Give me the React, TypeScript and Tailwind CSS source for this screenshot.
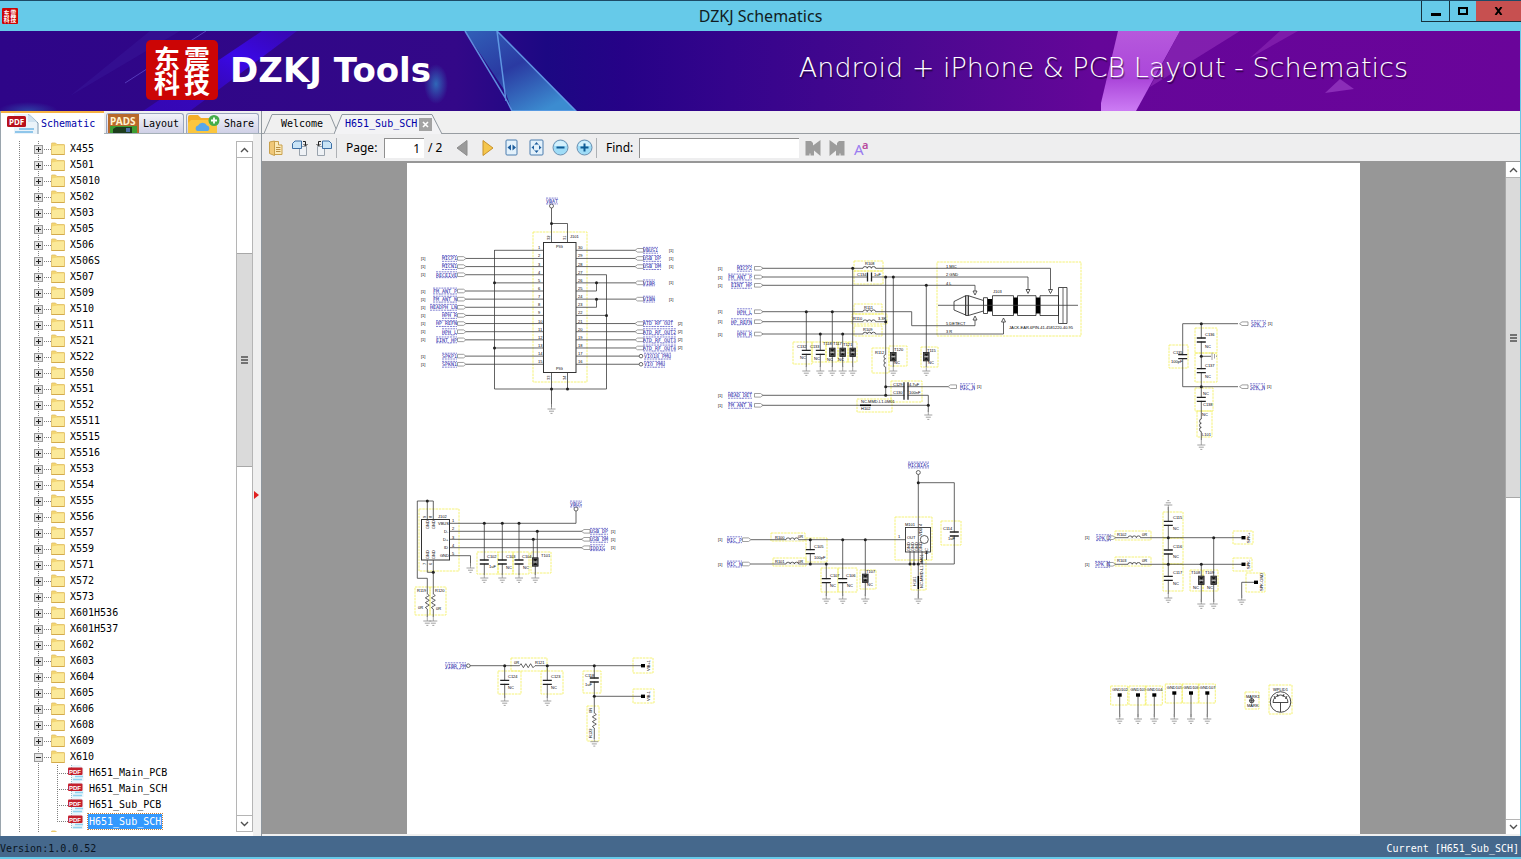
import React from "react";

const MONO = "font-['DejaVu_Sans_Mono','Liberation_Mono',monospace]";
const SANS = "font-['Noto_Sans','Open_Sans',sans-serif]";
const WIDE = "font-['DejaVu_Sans','Noto_Sans',sans-serif]";

/* ---------- schematic primitives ---------- */

const INK = "#3c3c3c";

const W = ({ d }: { d: string }) => <path d={d} fill="none" stroke={INK} strokeWidth="0.8" />;
const Dot = ({ x, y }: { x: number; y: number }) => <circle cx={x} cy={y} r="1.5" fill="#222" />;
const Sq = ({ x, y }: { x: number; y: number }) => <rect x={x - 2} y={y - 1.7} width="4" height="3.4" fill="#000" />;
const Box = ({ x, y, r, b }: { x: number; y: number; r: number; b: number }) => (
  <rect x={x} y={y} width={r - x} height={b - y} fill="none" stroke="#f4f06a" strokeWidth="0.9" strokeDasharray="2.5 0.8" />
);
const Gnd = ({ x, y, up }: { x: number; y: number; up?: boolean }) => {
  const s = up ? -1 : 1;
  return (
    <path
      d={`M${x} ${y - 5 * s}V${y}M${x - 4} ${y}h8M${x - 2.5} ${y + 2.2 * s}h5M${x - 1} ${y + 4.4 * s}h2`}
      fill="none"
      stroke="#8a8a8a"
      strokeWidth="0.8"
    />
  );
};
const Cap = ({ x, y }: { x: number; y: number }) => (
  <g>
    <rect x={x - 4.5} y={y - 1.5} width="9" height="3" fill="#fff" />
    <path d={`M${x - 4.5} ${y - 2}h9M${x - 4.5} ${y + 2}h9`} stroke="#222" strokeWidth="1.3" />
  </g>
);
const CapH = ({ x, y }: { x: number; y: number }) => (
  <g>
    <rect x={x - 1.5} y={y - 4} width="3" height="8" fill="#fff" />
    <path d={`M${x - 2} ${y - 4.5}v9M${x + 2} ${y - 4.5}v9`} stroke="#222" strokeWidth="1.3" />
  </g>
);
const Tvs = ({ x, y }: { x: number; y: number }) => (
  <g>
    <rect x={x - 2.8} y={y - 4.2} width="5.6" height="8.4" fill="#555" stroke="#222" strokeWidth="0.8" />
    <path d={`M${x - 2} ${y + 3}L${x} ${y + 0.6}L${x + 2} ${y + 3}zM${x - 2} ${y - 3}L${x} ${y - 0.6}L${x + 2} ${y - 3}z`} fill="#111" />
    <path d={`M${x - 2} ${y}h4`} stroke="#ddd" strokeWidth="0.8" />
  </g>
);
const CoilH = ({ x, y }: { x: number; y: number }) => (
  <g>
    <path d={`M${x} ${y}h12.6`} stroke="#fff" strokeWidth="1.6" />
    <path d={`M${x} ${y}a2.1 1.8 0 0 1 4.2 0a2.1 1.8 0 0 1 4.2 0a2.1 1.8 0 0 1 4.2 0`} fill="none" stroke={INK} strokeWidth="0.8" />
  </g>
);
const CoilV = ({ x, y }: { x: number; y: number }) => (
  <g>
    <path d={`M${x} ${y}v12.6`} stroke="#fff" strokeWidth="1.6" />
    <path d={`M${x} ${y}a1.8 2.1 0 0 0 0 4.2a1.8 2.1 0 0 0 0 4.2a1.8 2.1 0 0 0 0 4.2`} fill="none" stroke={INK} strokeWidth="0.8" />
  </g>
);
const ZigV = ({ x, y }: { x: number; y: number }) => (
  <g>
    <path d={`M${x} ${y}v15`} stroke="#fff" strokeWidth="1.6" />
    <path d={`M${x} ${y}l2 1.5l-4 2.4l4 2.4l-4 2.4l4 2.4l-4 2.4l2 1.5`} fill="none" stroke={INK} strokeWidth="0.8" />
  </g>
);
const PortR = ({ x, y }: { x: number; y: number }) => (
  <path d={`M${x} ${y - 1.8}h6l2.5 1.8l-2.5 1.8h-6z`} fill="#fff" stroke="#777" strokeWidth="0.7" />
);
const PortL = ({ x, y }: { x: number; y: number }) => (
  <path d={`M${x + 8} ${y - 1.8}h-6l-2.5 1.8l2.5 1.8h6z`} fill="#fff" stroke="#777" strokeWidth="0.7" />
);
const Net = ({ x, y, t }: { x: number; y: number; t: string }) => {
  const w = t.length * 3;
  return (
    <g>
      <path d={`M${x} ${y - 2.9}h${w}M${x} ${y + 2.9}h${w}`} stroke="#4a4ac0" strokeWidth="0.7" strokeDasharray="2 0.8" />
      <text x={x} y={y + 1.9} fontSize="5" fill="#2525a8">{t}</text>
    </g>
  );
};
/* A net name whose right edge sits at x. */
const NetEnd = ({ x, y, t }: { x: number; y: number; t: string }) => <Net x={x - t.length * 3} y={y} t={t} />;
const T = ({ x, y, t, v }: { x: number; y: number; t: string; v?: boolean }) => (
  <text x={x} y={y} fontSize="4" fill="#000" fontFamily="'Liberation Sans', sans-serif" transform={v ? `rotate(-90 ${x} ${y})` : undefined}>
    {t}
  </text>
);
const Ref = ({ x, y, t = "[1]" }: { x: number; y: number; t?: string }) => <T x={x} y={y + 1.5} t={t} />;

/* ---------- schematic blocks ---------- */

const leftNets: [number, string][] = [
  [1, "MICP1"], [2, "MICN1"], [3, "RECEIVE"], [5, "FM_ANT_P"], [6, "FM_ANT_N"], [7, "HEADPH_LN"],
  [8, "HPH_R"], [9, "HP_REFN"], [10, "HPH_L"], [11, "EINT_HP"], [13, "SPKP1"], [14, "SPKN1"],
];
const rightNets: [number, string, string][] = [
  [0, "VBUS1", "[1]"], [1, "USB_DP", "[1]"], [2, "USB_DM", "[1]"], [4, "VIBR", "[1]"], [6, "VIBN", "[1]"],
  [9, "ATD_RF_OUT", "[2]"], [10, "ATD_RF_OUT2", "[2]"], [11, "ATD_RF_OUT3", "[2]"], [12, "ATD_RF_OUT4", "[2]"],
];
const pinY = (i: number) => 250.3 + 8.14 * i;

const Connector = () => (
  <g>
    <Box x={533} y={232} r={587} b={382} />
    {Array.from({ length: 15 }, (_, i) => {
      const y = pinY(i);
      const inner = i === 0 || i === 4 || i === 12;
      const right = i === 3 || i === 8 ? 606.5 : i === 5 || i === 7 ? 596.5 : i > 12 ? 639 : 635;
      return (
        <g key={i}>
          <W d={`M${inner ? 494.5 : 466} ${y}H543`} />
          <W d={`M576 ${y}H${right}`} />
          <T x={538} y={y - 1} t={String(i + 1)} />
          <T x={578} y={y - 1} t={String(30 - i)} />
        </g>
      );
    })}
    <rect x="543.5" y="242.5" width="32.5" height="130" fill="#fff" stroke="#333" />
    <T x={556} y={248} t="PIG" />
    <T x={556} y={370} t="PIG" />
    <T x={570} y={238} t="J101" />
    <T x={550} y={240} t="32" v />
    <T x={566} y={240} t="31" v />
    <T x={550} y={380} t="33" v />
    <T x={566} y={380} t="34" v />
    <W d="M494.5 250V389H606.5V274.7M551.5 242.5V208M551.5 223.5H567.5V242.5M551.5 372.5V407M567.5 372.5V389" />
    <W d={`M596.5 ${pinY(5)}V${pinY(4)}M596.5 ${pinY(7)}V${pinY(6)}`} />
    <circle cx="551.5" cy="206" r="2" fill="#fff" stroke="#444" strokeWidth="0.8" />
    <Net x={546} y={201} t="VBAT" />
    <Gnd x={551.5} y={409} />
    <Dot x={551.5} y={223.5} /><Dot x={494.5} y={pinY(4)} /><Dot x={494.5} y={pinY(12)} />
    <Dot x={596.5} y={pinY(4)} /><Dot x={596.5} y={pinY(6)} /><Dot x={606.5} y={pinY(8)} />
    <Dot x={551.5} y={389} /><Dot x={567.5} y={389} />
    {leftNets.map(([i, t]) => (
      <g key={i}>
        <PortR x={457.5} y={pinY(i)} />
        <NetEnd x={457} y={pinY(i)} t={t} />
        <Ref x={421} y={pinY(i)} />
      </g>
    ))}
    {rightNets.map(([i, t, r]) => (
      <g key={i}>
        <PortL x={635.5} y={pinY(i)} />
        <Net x={643} y={pinY(i)} t={t} />
        <Ref x={i > 8 ? 678 : 669} y={pinY(i)} t={r} />
      </g>
    ))}
    <circle cx="641" cy={pinY(13)} r="1.8" fill="#fff" stroke="#444" strokeWidth="0.8" />
    <circle cx="641" cy={pinY(14)} r="1.8" fill="#fff" stroke="#444" strokeWidth="0.8" />
    <Net x={644} y={pinY(13)} t="VIO18_PMU" />
    <Net x={644} y={pinY(14)} t="VIO_PMU" />
  </g>
);

const Jack = () => (
  <g>
    <Box x={937} y={262} r={1081} b={336} />
    <g fill="#fff" stroke="#222" strokeWidth="0.8">
      <path d="M954 301.5L965.7 295.7V315L954 310zM965.7 295.7h2.6V315.5h-2.6zM968.3 295.7L983.5 300.5V311L968.3 315.5z" />
      <path d="M983.5 297.7h4V313.5h-4zM992.5 295.7H1013.5V315.5H992.5zM1017.5 295.7H1036V315.5H1017.5zM1040 295.7H1058.5V315.5H1040zM1058.5 287.5H1067V323.5H1058.5z" />
    </g>
    <path d="M987.5 299h4.5v12.5h-4.5zM1013.5 297.5h4.3v16h-4.3zM1036 297.5h4.3v16h-4.3z" fill="#000" />
    <W d="M938 305.3H1078M1063 288V323" />
    <g fill="#fff" stroke="#333" strokeWidth="0.8">
      <path d="M973 291h4l-2 4zM1026 289.5h4l-2 4zM1048.500 289.500h4l-2 4zM973 320h4l-2-4zM1001.500 322h4l-2-4z" />
    </g>
    <T x={993} y={293} t="J103" />
    <T x={946} y={268} t="1  MIC" /><T x={946} y={276} t="2  GND" /><T x={946} y={284.500} t="4  L" />
    <T x={946} y={325} t="5  DETECT" /><T x={946} y={333} t="3  R" />
    <T x={1009} y={329} t="JACK-EAR-6PIN-41-4581220-40.95" />
  </g>
);

const audioNets: [number, string][] = [
  [268.3, "MICP2"], [277, "FM_ANT_P"], [285.3, "EINT_HP"], [311.7, "HPH_L"], [321.7, "HP_REFN"], [334, "HPH_R"], [395.3, "HEAD_DET"], [405.3, "FM_ANT_N"],
];

const Audio = () => (
  <g>
    <Box x={854} y={261} r={883} b={271} /><Box x={854} y={271} r={883} b={284} />
    <Box x={854} y={304} r={882} b={314} /><Box x={852} y={314} r={887} b={324} /><Box x={854} y={326} r={882} b={336} />
    <Box x={793} y={342} r={812} b={364} /><Box x={812} y={342} r={826} b={362} /><Box x={826} y={342} r={838} b={362} />
    <Box x={838} y={342} r={848} b={362} /><Box x={848} y={342} r={857} b={362} />
    <Box x={872} y={348} r={889} b={373} /><Box x={889} y={346} r={907} b={366} /><Box x={921} y={347} r={938} b={367} />
    <Box x={891} y={381} r={922} b={402} /><Box x={857} y={399} r={892} b={412} />
    <Jack />
    <W d="M762 268.3H1050.500V290M762 277H1028V290M762 285.3H975V291M762 311.7H911.7V325.7H975V320M762 321.700H885.700M762 334H1003.500V322" />
    <W d="M852.700 268.300V367M806.300 311.700V367M820.300 334V367M832.300 311.700V367M842.700 334V367M885.700 277V395.300M893.300 277V367M926.300 285.300V367" />
    <W d="M885.700 386.700H948M762 395.300H928.300V412M762 405.300H928.300" />
    {[806.3, 820.3, 832.3, 842.7, 852.7, 893.3, 926.3].map((x) => <Gnd key={x} x={x} y={371} />)}
    <Gnd x={928.3} y={415} />
    <CoilH x={863} y={268.3} /><CapH x={869.5} y={277} />
    <CoilH x={863} y={311.7} /><CoilH x={863} y={321.7} /><CoilH x={863} y={334} />
    <Cap x={806.3} y={352.3} /><Cap x={820.3} y={352.3} />
    <Tvs x={832.3} y={352.3} /><Tvs x={842.7} y={352.3} /><Tvs x={852.7} y={352.3} /><Tvs x={893.3} y={356.7} /><Tvs x={926.3} y={356.7} />
    <CoilV x={885.7} y={354.500} />
    <CapH x={906} y={386.7} /><CapH x={906} y={395.3} />
    <path d="M860 405.300H871" stroke="#000" strokeWidth="1.600" />
    <Dot x={852.7} y={268.3} /><Dot x={885.7} y={277} /><Dot x={893.3} y={277} /><Dot x={926.3} y={285.3} /><Dot x={806.3} y={311.7} />
    <Dot x={832.3} y={311.7} /><Dot x={820.3} y={334} /><Dot x={842.7} y={334} /><Dot x={885.7} y={321.7} /><Dot x={885.7} y={386.7} />
    <Dot x={885.7} y={395.3} /><Dot x={928.3} y={405.3} />
    {audioNets.map(([y, t]) => (
      <g key={y}>
        <PortR x={754.5} y={y} />
        <NetEnd x={752} y={y} t={t} />
        <Ref x={718} y={y} />
      </g>
    ))}
    <PortL x={948.5} y={386.700} /><Net x={960} y={386.7} t="MIC_N" /><Ref x={977} y={386.7} />
    <T x={865} y={265} t="R108" /><T x={857} y={276} t="C134" /><T x={874} y={276} t="1uF" />
    <T x={864} y={309} t="R111" /><T x={853} y={320} t="R110" /><T x={878} y={320} t="3.3K" /><T x={863} y={331} t="R109" />
    <T x={797} y={348} t="C132" /><T x={800} y={359} t="NC" /><T x={810} y={348} t="C133" /><T x={814} y={360} t="NC" />
    <T x={823} y={345} t="T118" /><T x={833} y={345} t="T117" /><T x={843} y={346} t="T121" /><T x={827} y={361} t="NC" /><T x={838} y={361} t="NC" />
    <T x={875} y={354} t="R112" /><T x={894} y={351} t="T120" /><T x={894} y={364} t="NC" /><T x={927} y={352} t="T115" /><T x={928} y={364} t="NC" />
    <T x={893} y={385.500} t="C129" /><T x={909} y={385.500} t="4.7uF" /><T x={893} y={394} t="C130" /><T x={909} y={394} t="100nF" />
    <T x={861} y={403} t="NC-MMD-L1-0M01" /><T x={861} y={410} t="H102" />
  </g>
);

const Speaker = () => (
  <g>
    <Box x={1169} y={345} r={1188} b={368} /><Box x={1195} y={328} r={1217} b={353} /><Box x={1195} y={353} r={1217} b={382} />
    <Box x={1195} y={388} r={1213} b={411} /><Box x={1197} y={411} r={1212} b={437} />
    <W d="M1238 323.700H1182.700V386.700H1238M1201.300 323.700V440M1201.300 356.300H1211" />
    <path d="M1212 352.500v7.500M1214.500 354v4.500M1216.500 355.500v1.500" stroke="#8a8a8a" strokeWidth="0.8" />
    <Cap x={1182.7} y={356.7} /><Cap x={1201.3} y={340} /><Cap x={1201.3} y={370.7} /><Cap x={1201.3} y={399.3} /><CoilV x={1201.3} y={419} />
    <Gnd x={1201.3} y={445} />
    <Dot x={1201.3} y={323.7} /><Dot x={1201.3} y={356.3} /><Dot x={1201.3} y={386.7} />
    <PortL x={1240} y={323.7} /><Net x={1251} y={323.7} t="SPK_P" /><Ref x={1268} y={323.7} />
    <PortL x={1240} y={386.7} /><Net x={1250} y={386.7} t="SPK_N" /><Ref x={1267} y={386.7} />
    <T x={1173} y={354} t="C135" /><T x={1171} y={363} t="100pF" /><T x={1205} y={336} t="C136" /><T x={1205} y={348} t="NC" />
    <T x={1205} y={367} t="C137" /><T x={1205} y={378} t="NC" /><T x={1203} y={395} t="NC" /><T x={1203} y={406} t="C138" />
    <T x={1202} y={416} t="NC" /><T x={1202} y={436} t="L101" />
  </g>
);

const Usb = () => (
  <g>
    <Box x={419} y={509} r={459} b={571} /><Box x={415} y={587} r={430} b={615} /><Box x={430} y={587} r={446} b={615} />
    <Box x={477} y={552} r={498} b={574} /><Box x={498} y={552} r={513} b={574} /><Box x={513} y={552} r={529} b={574} /><Box x={531} y={552} r={551} b={573} />
    <W d="M449.700 523.300H576V511M449.700 531.300H582M449.700 539.300H582M449.700 547.700H582M449.700 555.700H470.500V566" />
    <W d="M433.300 519.500V501H417.300V578.300H427.300V617M427.300 519.500V501M427.300 560V572.300H433.300M433.300 560V617" />
    <W d="M484.300 523.300V575M502.300 523.300V575M519 523.300V575M533.300 539.300V560M537.300 531.300V560M535.300 563V575" />
    <rect x="421.500" y="519.500" width="28" height="40.500" fill="#fff" stroke="#333" />
    <T x={438} y={525} t="VBUS" /><T x={444} y={533} t="D-" /><T x={443} y={541} t="D+" /><T x={444} y={549} t="ID" /><T x={440} y={557} t="GND" />
    <T x={429} y={529} t="GND" v /><T x={435} y={529} t="GND" v /><T x={429} y={559} t="GND" v /><T x={435} y={559} t="GND" v />
    {[1, 2, 3, 4, 5].map((n, i) => <T key={n} x={452} y={522.300 + i * 8.100} t={String(n)} />)}
    <T x={426} y={518} t="9" v /><T x={432} y={518} t="8" v /><T x={426} y={565} t="7" v /><T x={432} y={565} t="6" v />
    <T x={438} y={518} t="J102" />
    <ZigV x={427.3} y={594} /><ZigV x={433.3} y={594} />
    <Gnd x={427.3} y={621} /><Gnd x={433.3} y={621} /><Gnd x={470.5} y={568} />
    {[484.3, 502.3, 519, 535.3].map((x) => <Gnd key={x} x={x} y={578} />)}
    <Cap x={484.3} y={562} /><Cap x={502.3} y={562} /><Cap x={519} y={562} /><Tvs x={535.3} y={562} />
    <Dot x={427.3} y={501} /><Dot x={433.3} y={572.3} /><Dot x={484.3} y={523.3} /><Dot x={502.3} y={523.3} /><Dot x={519} y={523.3} />
    <Dot x={533.3} y={539.3} /><Dot x={537.3} y={531.3} />
    <circle cx="576" cy="509" r="2" fill="#fff" stroke="#444" strokeWidth="0.8" /><Net x={570} y={504} t="VBUS" />
    <PortL x={582} y={531.3} /><Net x={590} y={531.3} t="USB_DP" /><Ref x={611} y={531.3} />
    <PortL x={582} y={539.3} /><Net x={590} y={539.3} t="USB_DM" /><Ref x={611} y={539.3} />
    <PortL x={582} y={547.7} /><Net x={590} y={547.7} t="IDDIG" /><Ref x={611} y={547.7} />
    <T x={487} y={558} t="C102" /><T x={489} y={568} t="1uF" /><T x={506} y={558} t="C103" /><T x={506} y={569} t="NC" />
    <T x={522} y={558} t="C104" /><T x={523} y={569} t="NC" /><T x={541} y={557} t="T101" />
    <T x={417} y={592} t="R119" /><T x={435} y={592} t="R120" /><T x={418} y={609} t="0R" /><T x={436} y={610} t="0R" />
  </g>
);

const Vibrator = () => (
  <g>
    <Box x={511} y={658} r={547} b={671} /><Box x={498} y={671} r={521} b={694} /><Box x={541} y={671} r={563} b={694} />
    <Box x={583} y={671} r={601} b={693} /><Box x={633} y={658} r={653} b={673} /><Box x={633} y={689} r={654} b={703} /><Box x={587} y={706} r={599} b={741} />
    <W d="M470 665.700H519.500l1.500-2l2.400 4l2.400-4l2.400 4l2.400-4l2.400 4l2-2H642M504.700 665.700V698M547.300 665.700V698M594.300 665.700V739M594.300 696.300H642" />
    <Net x={445} y={665.7} t="VIBR_PM" /><circle cx="468.300" cy="665.700" r="1.800" fill="#fff" stroke="#444" strokeWidth="0.8" />
    <Cap x={504.7} y={682.3} /><Cap x={547.3} y={682.3} /><Cap x={594.3} y={680} /><ZigV x={594.3} y={713} />
    <Gnd x={504.7} y={701} /><Gnd x={547.3} y={701} /><Gnd x={594.3} y={741.7} />
    <Dot x={504.7} y={665.7} /><Dot x={547.3} y={665.7} /><Dot x={594.3} y={665.7} /><Dot x={594.3} y={696.3} />
    <Sq x={643} y={665.700} /><Sq x={643} y={696.300} />
    <T x={514} y={664} t="0R" /><T x={535} y={664} t="R121" /><T x={508} y={678} t="C124" /><T x={508} y={689} t="NC" />
    <T x={551} y={678} t="C123" /><T x={551} y={689} t="NC" /><T x={585} y={677} t="C118" /><T x={585} y={686} t="1uF" />
    <T x={650} y={671} t="VIB+1" v /><T x={650} y={701} t="VIB-1" v /><T x={592} y={713} t="0R" v /><T x={592} y={738} t="R122" v />
  </g>
);

const Mic = () => (
  <g>
    <Box x={771} y={533} r={805} b={541} /><Box x={773} y={558} r={806} b={566} /><Box x={806} y={538} r={827} b={562} />
    <Box x={821} y={568} r={838} b={592} /><Box x={838} y={568} r={857} b={592} /><Box x={860} y={570} r={876} b={589} />
    <Box x={895} y={517} r={932} b={560} /><Box x={941} y={521} r={961} b={545} /><Box x={911} y={560} r={926} b={590} />
    <W d="M751 539.700H905.300M751 564H954.300V482.700H918.300M918.300 474V598M810.300 539.700V564M826.300 564V596M842.700 539.700V596M865.300 539.700V596" />
    <W d="M910 551V564M914 551V564M922 551V564M926.500 551V560" />
    <rect x="905.500" y="527.500" width="25" height="24.500" fill="none" stroke="#333" strokeWidth="0.9" />
    <circle cx="924.300" cy="539.500" r="4" fill="#fff" stroke="#333" strokeWidth="0.8" />
    <T x={905} y={526} t="M101" /><T x={898} y={538} t="1" /><T x={907} y={539} t="OUT" /><T x={922} y={536} t="VDD" v /><T x={922} y={526} t="4" v />
    <T x={909.500} y={551} t="GND" v /><T x={913.500} y={551} t="GND" v /><T x={917.500} y={551} t="GND" v /><T x={921.500} y={551} t="GND" v /><T x={928} y={554} t="NC" v />
    <path d="M918.300 576V589" stroke="#000" strokeWidth="1.500" />
    <T x={916} y={586} t="H101" v /><T x={923} y={588} t="NC-MMD-L1-0M01" v />
    <CoilH x={786} y={539.7} /><CoilH x={786} y={564} />
    <Cap x={810.3} y={551.7} /><Cap x={826.3} y={580.7} /><Cap x={842.7} y={580.7} /><Tvs x={865.3} y={578.3} /><Cap x={954.3} y={534} />
    <Gnd x={826.3} y={599} /><Gnd x={842.7} y={599} /><Gnd x={865.3} y={599} /><Gnd x={918.3} y={599} />
    <Dot x={810.3} y={539.7} /><Dot x={842.7} y={539.7} /><Dot x={865.3} y={539.7} /><Dot x={810.3} y={564} /><Dot x={826.3} y={564} />
    <Dot x={910} y={564} /><Dot x={914} y={564} /><Dot x={918.3} y={564} /><Dot x={918.3} y={482.7} />
    <circle cx="918.300" cy="472.500" r="2" fill="#fff" stroke="#444" strokeWidth="0.8" /><Net x={908} y={465} t="MICBIAS" />
    <PortR x={742.500} y={539.7} /><NetEnd x={742} y={539.7} t="MIC_P" /><Ref x={718} y={539.7} />
    <PortR x={742.500} y={564} /><NetEnd x={742} y={564} t="MIC_N" /><Ref x={718} y={564} />
    <T x={775} y={539} t="R100" /><T x={798} y={538} t="0R" /><T x={775} y={563} t="R101" /><T x={798} y={563} t="0R" />
    <T x={814} y={548} t="C105" /><T x={814} y={559} t="100pF" /><T x={830} y={577} t="C107" /><T x={830} y={587} t="NC" />
    <T x={846} y={577} t="C106" /><T x={847} y={587} t="NC" /><T x={866} y={573} t="T107" /><T x={867} y={586} t="NC" />
    <T x={943} y={530} t="C114" /><T x={948} y={540} t="1uF" />
  </g>
);

const gndPins: [number, number, string][] = [
  [1119.7, 695, "GND102"], [1138, 695, "GND103"], [1154.3, 695, "GND104"], [1174.3, 693, "GND105"], [1191, 693, "GND106"], [1207.3, 693, "GND107"],
];

const Output = () => (
  <g>
    <Box x={1115} y={531} r={1151} b={540} /><Box x={1115} y={557} r={1151} b={566} /><Box x={1163} y={512} r={1183} b={538} />
    <Box x={1163} y={538} r={1183} b={564} /><Box x={1163} y={564} r={1183} b={591} /><Box x={1190} y={570} r={1203} b={591} />
    <Box x={1203} y={570} r={1218} b={591} /><Box x={1233} y={531} r={1253} b={544} /><Box x={1233} y={558} r={1252} b={571} /><Box x={1246} y={573} r={1265} b={592} />
    <W d="M1115 537.700H1242M1115 564.300H1242M1168.300 507V594M1201.300 564.300V602M1213.700 537.700V602M1241.700 598V582.300H1254" />
    <CoilH x={1128} y={537.7} /><CoilH x={1128} y={564.3} />
    <Cap x={1168.3} y={523.3} /><Cap x={1168.3} y={552} /><Cap x={1168.3} y={578.3} /><Tvs x={1201.3} y={580.3} /><Tvs x={1213.7} y={580.3} />
    <Gnd x={1168.3} y={505} up /><Gnd x={1168.3} y={598} /><Gnd x={1201.3} y={604} /><Gnd x={1213.7} y={604} /><Gnd x={1241.7} y={600} />
    <Dot x={1168.3} y={537.7} /><Dot x={1168.3} y={564.3} /><Dot x={1201.3} y={564.3} /><Dot x={1213.7} y={537.7} />
    <Sq x={1243.5} y={537.7} /><Sq x={1243.5} y={564.3} /><Sq x={1256} y={582.300} />
    <PortR x={1107} y={537.7} /><NetEnd x={1111} y={537.7} t="SPK_P" /><Ref x={1085} y={537.7} />
    <PortR x={1107} y={564.3} /><NetEnd x={1110} y={564.3} t="SPK_N" /><Ref x={1085} y={564.3} />
    <T x={1117} y={536} t="R102" /><T x={1142} y={535.500} t="0R" /><T x={1117} y={562} t="R103" /><T x={1142} y={562} t="0R" />
    <T x={1173} y={519} t="C115" /><T x={1173} y={530} t="NC" /><T x={1173} y={548} t="C116" /><T x={1173} y={558} t="NC" />
    <T x={1173} y={574} t="C117" /><T x={1173} y={585} t="NC" /><T x={1191} y={574} t="T108" /><T x={1205} y={574} t="T109" />
    <T x={1193} y={589} t="NC" /><T x={1207} y={589} t="NC" />
    <T x={1250} y={543} t="SPK+" v /><T x={1250} y={569} t="SPK-" v /><T x={1263} y={591} t="SPK-GND" v />
  </g>
);

const Misc = () => (
  <g>
    {gndPins.map(([x, y, t]) => (
      <g key={t}>
        <Box x={x - 9} y={y - 9} r={x + 8} b={y + 10} />
        <W d={`M${x} ${y}V717`} />
        <Sq x={x} y={y} />
        <Gnd x={x} y={719} />
        <T x={x - 7.500} y={y - 4.500} t={t} />
      </g>
    ))}
    <Box x={1245} y={692} r={1259} b={709} />
    <circle cx="1251.700" cy="700.700" r="2.200" fill="#bbb" stroke="#333" strokeWidth="0.8" />
    <path d="M1249 700.700h5.400M1251.700 698v5.400" stroke="#333" strokeWidth="0.7" />
    <T x={1246} y={697.500} t="MARK1" /><T x={1247} y={707} t="MARK" />
    <Box x={1269} y={685} r={1292} b={714} />
    <T x={1273} y={690.500} t="WPLID1" />
    <g fill="none" stroke="#333" strokeWidth="0.9">
      <circle cx="1280.500" cy="702" r="10.300" fill="#fff" />
      <path d="M1273 702.500a7.500 7.500 0 0 1 15 0zM1280.500 702.500V712M1275.500 699l-1.500-3M1278 697l-1-3M1283 697l1-3M1285.500 699l1.500-3" />
    </g>
  </g>
);

/* ---------- icons ---------- */

const Seal = ({ className }: { className: string }) => (
  <svg viewBox="0 0 72 60" className={className} aria-hidden="true" preserveAspectRatio="none">
    <rect width="72" height="60" rx="5" fill="#cc0505" />
    <g fill="#fff" fontFamily="'Noto Sans CJK SC', sans-serif" fontWeight="700" fontSize="26">
      <text x="8" y="29">东</text><text x="38" y="29">震</text><text x="8" y="53">科</text><text x="38" y="53">技</text>
    </g>
  </svg>
);

const Folder = () => (
  <svg width="15" height="14" viewBox="0 0 15 14" aria-hidden="true">
    <path d="M.5 2.500V1.500Q.5 1 1 1H4.500L6 2.500H13Q13.500 2.500 13.500 3V12.500H.5z" fill="#f3d673" stroke="#dfbd62" strokeWidth=".8" />
    <path d="M1 4.500L6.500 3.500H13V12H1z" fill="#fbe999" />
    <path d="M.5 12.500H13.500" stroke="#d3aa4c" />
  </svg>
);

const PdfSmall = () => (
  <svg width="16" height="16" viewBox="0 0 16 16" aria-hidden="true">
    <path d="M3.500 0H12L15.500 3.500V16H3.500z" fill="#e9f5fb" />
    <path d="M3.500 0V16" stroke="#90b8c8" strokeDasharray="1 1" />
    <path d="M7 11.500h8M5 14.500h9" stroke="#8fd2ee" strokeWidth="1.400" />
    <rect y="2.500" width="14.500" height="7.500" rx="1" fill="#c4202c" />
    <text x="1" y="8.500" fontSize="6" fontWeight="700" fill="#fff" fontFamily="'Liberation Sans', sans-serif">PDF</text>
  </svg>
);

const PdfLarge = () => (
  <svg width="32" height="20" viewBox="0 0 32 20" aria-hidden="true">
    <path d="M7 0H23L31 8V20H7z" fill="#eaf3fa" />
    <path d="M21 0L31 9V20" fill="none" stroke="#7c98b0" />
    <path d="M21 0V8H30z" fill="#cfe2f0" />
    <path d="M12 15h15M8 18h18" stroke="#8fc6ea" strokeWidth="1.800" />
    <rect y="2" width="19" height="11" rx="1.500" fill="#b8101c" />
    <text x="2" y="10.500" fontSize="8" fontWeight="700" fill="#fff" fontFamily="'Noto Sans', sans-serif">PDF</text>
  </svg>
);

const Pads = () => (
  <svg width="31" height="19" viewBox="0 0 31 19" aria-hidden="true">
    <rect width="31" height="19" fill="#b8692a" />
    <rect x="2" y="12" width="27" height="7" fill="#3f9e32" />
    <path d="M5 19v-4l3-2h16v6z" fill="#1d3d1d" />
    <rect x="18" y="14" width="4" height="4" fill="#4d6fa5" />
    <text x="2" y="10.500" fontSize="10" fontWeight="700" fill="#fff3d0" fontFamily="'Noto Sans', sans-serif">PADS</text>
  </svg>
);

const ShareIcon = () => (
  <svg width="32" height="19" viewBox="0 0 32 19" aria-hidden="true">
    <path d="M0 3Q0 1 2 1H10L13 4H27Q29 4 29 6V19H0z" fill="#f3ae27" />
    <path d="M0 19V9L3 6H29V19z" fill="#fbc63d" />
    <path d="M9 17a3 3 0 0 1 1-5.500a5 5 0 0 1 9 0a3 3 0 0 1 1 5.500z" fill="#56a7ea" />
    <circle cx="26" cy="6.500" r="5.500" fill="#45ad4b" />
    <path d="M26 3.500v6M23 6.500h6" stroke="#fff" strokeWidth="1.800" />
  </svg>
);

const OpenIcon = () => (
  <svg width="16" height="16" viewBox="0 0 16 16">
    <path d="M5 1.500h5.500V5h3.500v9.500H5z" fill="#fbe9b6" stroke="#c9a04c" />
    <path d="M1.500 2L6.500 1V15.500L1.500 13.500z" fill="#f0c878" stroke="#c9a04c" />
    <path d="M8 7.500h4.500M8 9.500h4.500M8 11.500h4.500" stroke="#b98f45" />
  </svg>
);
const RotateIcon = ({ flip }: { flip?: boolean }) => (
  <svg width="18" height="18" viewBox="0 0 18 18">
    <g transform={flip ? "matrix(-1 0 0 1 18 0)" : undefined}>
      <path d="M8.500 8.500V16.500H15.500V7.500H10" fill="#eef1f5" stroke="#9aa3ad" />
      <path d="M1.500 4.500L4 2H10.500V9.500H1.500z" fill="#c9e4f7" stroke="#3d6fa5" />
      <path d="M12 2.500h2.500v4M12.500 5l2 2l2-2" fill="none" stroke="#222" />
    </g>
  </svg>
);
const FitWidth = () => (
  <svg width="14" height="17" viewBox="0 0 14 17">
    <rect x="1" y="1" width="11" height="15" rx="1" fill="#e3f1fb" stroke="#4a7cae" />
    <path d="M6 5.500V11.500L2.500 8.500zM7.500 5.500V11.500L11 8.500z" fill="#1d5e9e" />
  </svg>
);
const FitPage = () => (
  <svg width="15" height="17" viewBox="0 0 15 17">
    <rect x="1" y="1" width="13" height="15" rx="1" fill="#e3f1fb" stroke="#4a7cae" />
    <circle cx="7.500" cy="8.500" r="3.500" fill="none" stroke="#9bb8d3" strokeDasharray="2 1.500" />
    <path d="M7.500 3L9.500 5.500H5.500zM7.500 14L5.500 11.500H9.500zM2.500 8.500L5 6.500V10.500zM12.500 8.500L10 10.500V6.500z" fill="#1d5e9e" />
  </svg>
);
const Zoom = ({ plus }: { plus?: boolean }) => (
  <svg width="17" height="17" viewBox="0 0 17 17">
    <circle cx="8.500" cy="8.500" r="7.500" fill="#9fdcf7" stroke="#6b8fb0" />
    <path d="M2.500 7a6 5 0 0 1 12 0z" fill="#d4f0fc" />
    <path d={plus ? "M4.500 8.500h8M8.500 4.500v8" : "M4.500 8.500h8"} stroke="#0f5b94" strokeWidth="2" />
  </svg>
);
const Triangle = ({ right }: { right?: boolean }) => (
  <svg width="12" height="16" viewBox="0 0 12 16">
    {right ? <path d="M1 .5L11 8L1 15.500z" fill="#f5c64c" stroke="#c8922b" /> : <path d="M11 .5L1 8L11 15.500z" fill="#9a9a9a" stroke="#8c8c8c" />}
  </svg>
);
const FindStep = ({ flip }: { flip?: boolean }) => (
  <svg width="16" height="16" viewBox="0 0 16 16">
    <path transform={flip ? "matrix(-1 0 0 1 16 0)" : undefined} d="M.5 1H6L8 3V5.500L15.500 0V16L9 10.500V15.500H5.500V13.500H4.500V15.500H.5z" fill="#9c9c9c" />
  </svg>
);
const CaseIcon = () => (
  <svg width="20" height="24" viewBox="0 0 20 24" aria-hidden="true">
    <text x="3" y="19" fontSize="15" fill="#9a7cf0" fontFamily="'Noto Sans', sans-serif">A</text>
    <text x="11" y="13" fontSize="11" fontWeight="600" fill="#b84a9e" fontFamily="'Noto Sans', sans-serif">a</text>
  </svg>
);
const Chevron = ({ down }: { down?: boolean }) => (
  <svg width="9" height="6" viewBox="0 0 9 6">
    <path d={down ? "M1 1L4.500 4.500L8 1" : "M1 5L4.500 1.500L8 5"} fill="none" stroke="#505050" strokeWidth="1.400" />
  </svg>
);
const Grip = () => (
  <svg width="7" height="8"><path d="M0 1h7M0 4h7M0 7h7" stroke="#505050" strokeWidth="1.600" /></svg>
);

/* ---------- window parts ---------- */

const TitleBar = () => (
  <header className="grid h-[31px] shrink-0 grid-cols-[1fr_auto_1fr] items-center border-t border-[#1d4a66] bg-[#66cae9]">
    <Seal className="ml-0.5 h-4 w-4" />
    <h1 className={`text-[16px] leading-5 text-[#111c22] ${SANS}`}>DZKJ Schematics</h1>
    <div className="flex self-start justify-self-end border-l border-[#16303c]">
      <button aria-label="Minimize" className="flex h-[21px] w-7 items-center justify-center border-r border-b border-[#16303c]">
        <svg width="10" height="10"><path d="M0 7h10v3H0z" /></svg>
      </button>
      <button aria-label="Maximize" className="flex h-[21px] w-[26px] items-center justify-center border-b border-[#16303c]">
        <svg width="10" height="8"><path d="M1 1h8v6h-8z" fill="none" stroke="#000" strokeWidth="2" /></svg>
      </button>
      <button aria-label="Close" className="flex h-[21px] w-[45px] items-center justify-center border-b border-[#16303c] bg-[#c75050]">
        <svg width="9" height="8" viewBox="0 0 9 8"><path d="M1.500 0L7.500 8M7.500 0L1.500 8" stroke="#000" strokeWidth="2" /></svg>
      </button>
    </div>
  </header>
);

const Banner = () => (
  <div className="grid h-20 shrink-0 overflow-hidden border-r border-[#66cae9] bg-[#300887]">
    <svg viewBox="0 0 1520 80" preserveAspectRatio="none" className="col-start-1 row-start-1 h-20 w-full" aria-hidden="true">
      <defs>
        <linearGradient id="sky">
          <stop offset="0" stopColor="#2e0588" /><stop offset=".3" stopColor="#330888" /><stop offset=".36" stopColor="#1c0883" />
          <stop offset=".41" stopColor="#260287" /><stop offset=".48" stopColor="#34048c" /><stop offset=".6" stopColor="#4a0890" />
          <stop offset=".72" stopColor="#650699" /><stop offset="1" stopColor="#6a049a" />
        </linearGradient>
        <linearGradient id="shard" x2=".7" y2="1">
          <stop offset="0" stopColor="#3160b8" /><stop offset=".5" stopColor="#2a3aa2" /><stop offset="1" stopColor="#3c8cd0" />
        </linearGradient>
        <linearGradient id="pink" y2="1" x2="0">
          <stop offset="0" stopColor="#b659dc" /><stop offset=".6" stopColor="#ab46da" /><stop offset="1" stopColor="#cc7cf4" />
        </linearGradient>
        <linearGradient id="beam" x1="1" x2="0" y2="1">
          <stop offset="0" stopColor="#3a08c0" stopOpacity=".7" /><stop offset=".35" stopColor="#3a08e8" /><stop offset=".6" stopColor="#3a08e0" stopOpacity=".6" /><stop offset="1" stopColor="#3a08e0" stopOpacity=".5" />
        </linearGradient>
        <radialGradient id="glow"><stop offset="0" stopColor="#2f78c0" stopOpacity=".85" /><stop offset="1" stopColor="#2f78c0" stopOpacity="0" /></radialGradient>
      </defs>
      <rect width="1520" height="80" fill="url(#sky)" />
      <path d="M262 0H297L190 80H143z" fill="url(#beam)" />
      <path d="M206 0L125 52" stroke="#6048c8" opacity=".8" />
      <path d="M150 0H180L70 65z" fill="#3d20a0" opacity=".35" />
      <ellipse cx="436" cy="53" rx="12" ry="20" fill="url(#glow)" />
      <ellipse cx="28" cy="80" rx="30" ry="9" fill="url(#glow)" opacity=".6" />
      <path d="M465 0H497L576 80H512L505 60z" fill="url(#shard)" />
      <path d="M465 0L506 68L512 80H576L497 0L506 70" fill="none" stroke="#67a5ec" strokeWidth="1.500" opacity=".85" />
      <path d="M1118 0H1180L1136 80H1101V72z" fill="url(#pink)" />
      <path d="M1180 0H1240L1150 56z" fill="#8b28b6" opacity=".75" />
      <path d="M1280 0H1298L1250 27z" fill="#8825b0" opacity=".7" />
      <path d="M1340 48L1354 58L1325 62z" fill="#9a3fc4" opacity=".7" />
    </svg>
    <div className="col-start-1 row-start-1 flex h-20 items-center justify-between pr-28 pb-0.5 pl-[146px] text-white">
      <div className="flex items-center gap-3">
        <Seal className="h-[60px] w-[72px]" />
        <strong className={`text-[34px] leading-10 font-bold whitespace-nowrap ${WIDE}`}>DZKJ Tools</strong>
      </div>
      <p className={`text-[27px] leading-10 font-extralight whitespace-nowrap pb-1 [text-shadow:1px_2px_1px_rgba(0,0,0,0.5)] ${WIDE}`}>
        Android + iPhone &amp; PCB Layout - Schematics
      </p>
    </div>
  </div>
);

const folders = [
  "X455", "X501", "X5010", "X502", "X503", "X505", "X506", "X506S", "X507", "X509", "X510", "X511", "X521", "X522", "X550", "X551",
  "X552", "X5511", "X5515", "X5516", "X553", "X554", "X555", "X556", "X557", "X559", "X571", "X572", "X573", "X601H536", "X601H537",
  "X602", "X603", "X604", "X605", "X606", "X608", "X609", "X610",
];
const files = ["H651_Main_PCB", "H651_Main_SCH", "H651_Sub_PCB", "H651_Sub_SCH"];

const FolderRow = ({ name, open }: { name: string; open?: boolean }) => (
  <li className="flex h-4 items-center">
    <button aria-label={`Toggle ${name || "folder"}`} className="h-4 w-12 shrink-0">
      <svg width="48" height="16" viewBox="0 0 48 16">
        <path d="M16.500 0V16M35.500 0V16M41 8.500H48" stroke="#808080" strokeDasharray="1 1" />
        <rect x="31.500" y="4.500" width="8" height="8" fill="#e4e4e4" stroke="#999" />
        <path d={open ? "M33 8.500h5" : "M33 8.500h5M35.500 6v5"} stroke="#222" />
      </svg>
    </button>
    <Folder />
    <span className="ml-1 leading-4">{name}</span>
  </li>
);

const FileRow = ({ name, last }: { name: string; last?: boolean }) => (
  <li className="flex h-4 items-center">
    <svg width="65" height="16" viewBox="0 0 65 16" className="shrink-0" aria-hidden="true">
      <path d={`M16.500 0V16M35.500 0V16M54.500 0V${last ? 9 : 16}M54 8.500H65`} stroke="#808080" strokeDasharray="1 1" />
    </svg>
    <PdfSmall />
    <span className={last ? "ml-1 outline outline-dotted outline-[#c08040] bg-[#3399ff] px-px leading-[15px] text-white" : "ml-1 px-px leading-4"}>{name}</span>
  </li>
);

const tabBase = "flex h-5 items-center gap-1 self-end rounded-t-[3px] border border-b-0 border-[#9aa5bd] bg-gradient-to-b from-[#f3f3f9] to-[#cfd0e6] px-px";

const Sidebar = () => (
  <aside className="flex w-[261px] shrink-0 flex-col border-l border-[#9aa5ad] bg-[#f0f0f0]">
    <nav className="flex h-[23px] shrink-0 gap-0.5 border-b border-[#a5b0b8]">
      <button className="-mb-px flex w-[103px] items-center gap-0.5 border-t-2 border-[#f5b041] bg-white pl-1.5 text-[#0000a8]">
        <PdfLarge />Schematic
      </button>
      <button className={`${tabBase} w-[78px]`}><Pads />Layout</button>
      <button className={`${tabBase} w-[73px]`}><ShareIcon />Share</button>
    </nav>
    <div className="flex min-h-0 flex-1">
      <div className="flex min-w-0 flex-1 bg-white pt-[7px] pb-1">
        <ul className="min-w-0 flex-1 overflow-hidden pl-0.5">
          {folders.map((f) => <FolderRow key={f} name={f} open={f === "X610"} />)}
          {files.map((f, i) => <FileRow key={f} name={f} last={i === files.length - 1} />)}
          <FolderRow name="" />
        </ul>
        <div className="flex w-[17px] shrink-0 flex-col border-x border-[#b5b5b5]">
          <button aria-label="Scroll up" className="flex h-[17px] shrink-0 items-center justify-center border-y border-[#b5b5b5]"><Chevron /></button>
          <div className="flex-[95] bg-white" />
          <div className="flex flex-[213] items-center justify-center border-y border-[#a8a8a8] bg-[#dadada]"><Grip /></div>
          <div className="flex-[349] bg-white" />
          <button aria-label="Scroll down" className="flex h-[17px] shrink-0 items-center justify-center border-y border-[#b5b5b5]"><Chevron down /></button>
        </div>
      </div>
      <div className="flex w-2 shrink-0 items-center pt-5 pl-px">
        <svg width="5" height="8"><path d="M0 0L5 4L0 8z" fill="#e02020" /></svg>
      </div>
    </div>
  </aside>
);

const DocTabs = () => (
  <nav className="flex h-[23px] shrink-0 border-b border-[#989da2] pl-0.5">
    <button className="mt-[3px] grid h-5 w-[70px]">
      <svg viewBox="0 0 76 20" width="76" height="20" className="col-start-1 row-start-1" aria-hidden="true">
        <path d="M0 19.500L8 .5H66L74 19.500" fill="#f0f0f0" stroke="#8f979e" />
      </svg>
      <span className="col-start-1 row-start-1 self-center">Welcome</span>
    </button>
    <div className="mt-[3px] grid h-5 w-[110px]">
      <svg viewBox="0 0 110 20" width="110" height="20" className="col-start-1 row-start-1" aria-hidden="true">
        <path d="M0 20L8 .5H98L108 20" fill="#f3f3f5" stroke="#8f979e" />
      </svg>
      <div className="col-start-1 row-start-1 flex items-center gap-0.5 pl-[11px] text-[#0000a8]">
        <button>H651_Sub_SCH</button>
        <button aria-label="Close tab" className="flex h-[13px] w-[13px] items-center justify-center bg-[#a3a3a3]">
          <svg width="7" height="7"><path d="M1 1L6 6M6 1L1 6" stroke="#fff" strokeWidth="1.600" /></svg>
        </button>
      </div>
    </div>
  </nav>
);

const Tool = ({ label, children }: { label: string; children: React.ReactNode }) => (
  <button aria-label={label} className="flex h-6 w-6 shrink-0 items-center justify-center">{children}</button>
);
const Sep = () => <span className="h-5 w-px shrink-0 bg-[#aeb1b5]" />;

const Toolbar = () => (
  <div className={`flex h-7 shrink-0 items-center border-b border-[#979797] bg-[#eeeeef] pl-0.5 text-[12px] text-black ${SANS}`}>
    <Tool label="Open"><OpenIcon /></Tool>
    <Tool label="Rotate right"><RotateIcon /></Tool>
    <Tool label="Rotate left"><RotateIcon flip /></Tool>
    <Sep />
    <label htmlFor="page" className="ml-[9px] w-[38px]">Page:</label>
    <input id="page" defaultValue="1" className="h-5 w-10 border-t border-l border-[#8f8f8f] bg-white pr-1 text-right outline-none" />
    <span className="w-[26px] pl-1 whitespace-nowrap">/ 2</span>
    <Tool label="Previous page"><Triangle /></Tool>
    <span className="w-0.5" />
    <Tool label="Next page"><Triangle right /></Tool>
    <Tool label="Fit width"><FitWidth /></Tool>
    <Tool label="Fit page"><FitPage /></Tool>
    <Tool label="Zoom out"><Zoom /></Tool>
    <Tool label="Zoom in"><Zoom plus /></Tool>
    <Sep />
    <label htmlFor="find" className="ml-[9px] w-[33px]">Find:</label>
    <input id="find" className="h-5 w-40 border-t border-l border-[#8f8f8f] bg-white px-1 outline-none" />
    <span className="w-0.5" />
    <Tool label="Find previous"><FindStep /></Tool>
    <Tool label="Find next"><FindStep flip /></Tool>
    <Tool label="Match case"><CaseIcon /></Tool>
  </div>
);

const Viewer = () => (
  <div className="flex min-h-0 flex-1 bg-[#979797]">
    <main className="flex min-w-0 flex-1 justify-center overflow-hidden pt-px">
      <svg width="953" height="671" viewBox="407 163 953 671" className="shrink-0 bg-white" fontFamily="'DejaVu Sans Mono', monospace" role="img" aria-label="H651 sub board schematic">
        <Connector /><Audio /><Speaker /><Usb /><Vibrator /><Mic /><Output /><Misc />
      </svg>
    </main>
    <div className="flex w-[15px] shrink-0 flex-col border-l border-[#a8a8a8] bg-[#f4f4f4]">
      <button aria-label="Scroll up" className="flex h-4 shrink-0 items-center justify-center border-b border-[#b5b5b5] bg-white"><Chevron /></button>
      <div className="flex flex-[320] items-center justify-center border-b border-[#a8a8a8] bg-[#dadada]"><Grip /></div>
      <div className="flex-[322] bg-white" />
      <button aria-label="Scroll down" className="flex h-[15px] shrink-0 items-center justify-center border-t border-[#b5b5b5] bg-white"><Chevron down /></button>
    </div>
  </div>
);

export default function App() {
  return (
    <div className={`flex h-screen flex-col overflow-hidden bg-[#f0f0f0] text-[10px] leading-4 text-black ${MONO}`}>
      <TitleBar />
      <Banner />
      <div className="flex min-h-0 flex-1 border-r border-[#66cae9]">
        <Sidebar />
        <section className="flex min-w-0 flex-1 flex-col border-l border-[#8f979e] pb-0.5">
          <DocTabs />
          <Toolbar />
          <Viewer />
        </section>
      </div>
      <footer className="flex h-[23px] shrink-0 items-center justify-between border-b-2 border-[#66cae9] bg-[#45688c] pt-1 pr-0.5">
        <span className="text-[#0a1420]">Version:1.0.0.52</span>
        <span className="text-white">Current [H651_Sub_SCH]</span>
      </footer>
    </div>
  );
}
